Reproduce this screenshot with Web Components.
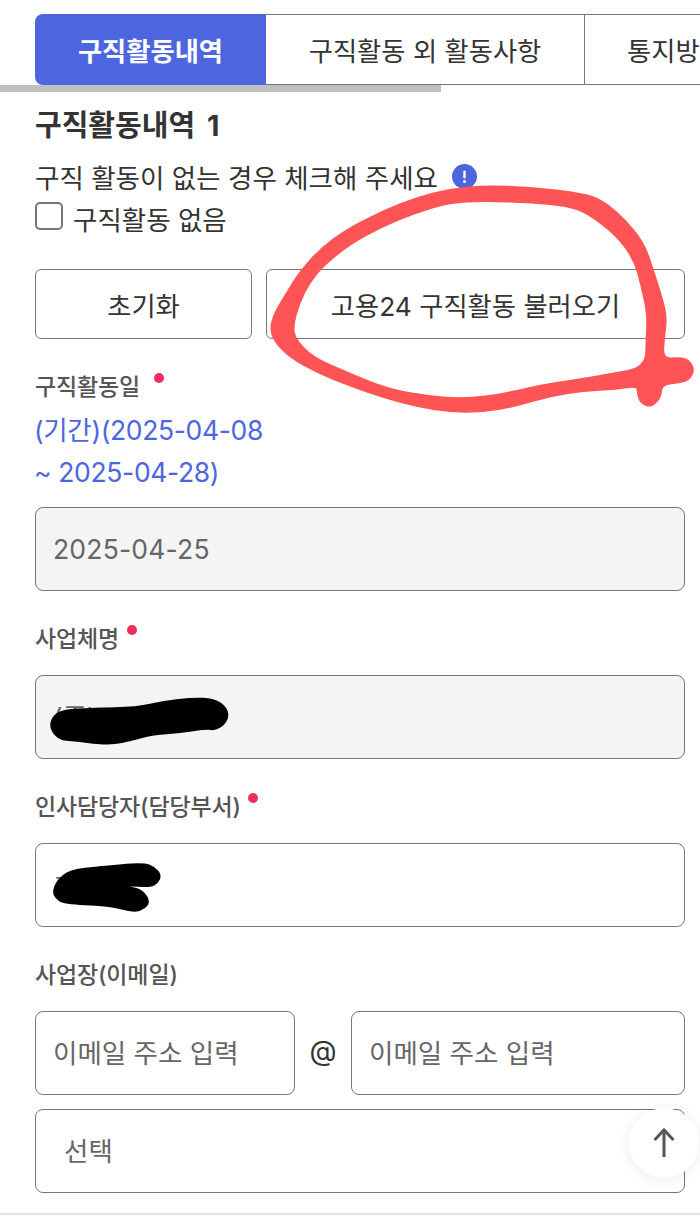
<!DOCTYPE html>
<html lang="ko">
<head>
<meta charset="utf-8">
<title>구직활동내역</title>
<style>
  html, body { margin: 0; padding: 0; background: #fff; }
  body {
    position: relative;
    width: 700px;
    height: 1219px;
    overflow: hidden;
    font-family: Inter, "Noto Sans CJK KR", "Noto Sans", sans-serif;
    color: #333;
  }
</style>
</head>
<body>
<job-tabs>
  <job-tab active>구직활동내역</job-tab>
  <job-tab>구직활동 외 활동사항</job-tab>
  <job-tab>통지방법</job-tab>
</job-tabs>

<job-form>
  <job-heading>구직활동내역 1</job-heading>
  <job-notice>구직 활동이 없는 경우 체크해 주세요</job-notice>
  <job-check>구직활동 없음</job-check>

  <job-button slot="buttons">초기화</job-button>
  <job-button slot="buttons">고용24 구직활동 불러오기</job-button>

  <job-field slot="fields" label="구직활동일" required gap="14" style="--label-gap:5px">
    <job-period>(기간)(2025-04-08<br>~ 2025-04-28)</job-period>
    <job-input disabled>2025-04-25</job-input>
  </job-field>
  <job-field slot="fields" label="사업체명" required gap="8">
    <job-input disabled hangul>(주)</job-input>
  </job-field>
  <job-field slot="fields" label="인사담당자(담당부서)" required gap="7">
    <job-input hangul>초</job-input>
  </job-field>
  <job-field slot="fields" label="사업장(이메일)">
    <job-email></job-email>
    <job-input select hangul>선택</job-input>
  </job-field>
</job-form>

<job-marks></job-marks>
<job-top></job-top>

<script>
class JobTabs extends HTMLElement {
  constructor() {
    super();
    this.attachShadow({ mode: 'open' });
    this.shadowRoot.innerHTML = `
      <style>
        :host { display: block; padding-top: 14px; }
        .row { display: flex; margin-left: 35px; height: 71px; overflow: hidden; }
        .bar { width: 441px; height: 7px; background: #c0c0c0; }
      </style>
      <div class="row"><slot></slot></div>
      <div class="bar"></div>
    `;
  }
}

class JobTab extends HTMLElement {
  constructor() {
    super();
    this.attachShadow({ mode: 'open' });
    this.shadowRoot.innerHTML = `
      <style>
        :host {
          display: flex;
          align-items: center;
          justify-content: center;
          flex: none;
          box-sizing: border-box;
          height: 71px;
          font-size: 26.3px;
          color: #333;
          border-top: 1px solid #777;
          border-bottom: 1px solid #777;
          border-right: 1px solid #777;
          width: 319px;
        }
        :host(:last-child) { width: 200px; padding-left: 42px; justify-content: flex-start; border-right: 0; }
        :host([active]) {
          width: 231px;
          background: #4d66e0;
          color: #fff;
          font-weight: 700;
          border: 0;
          border-radius: 8px 0 0 8px;
        }
      </style>
      <slot></slot>
    `;
  }
}

class JobForm extends HTMLElement {
  constructor() {
    super();
    this.attachShadow({ mode: 'open' });
    this.shadowRoot.innerHTML = `
      <style>
        :host { display: block; padding: 0 15px 0 35px; }
        .buttons { display: grid; grid-template-columns: 217px 419px; column-gap: 14px; margin-top: 30px; }
        .line { height: 2px; margin: 20px -15px 0 -35px; background: #e4e4e4; }
      </style>
      <slot></slot>
      <div class="buttons"><slot name="buttons"></slot></div>
      <slot name="fields"></slot>
      <div class="line"></div>
    `;
  }
}

class JobHeading extends HTMLElement {
  constructor() {
    super();
    this.attachShadow({ mode: 'open' });
    this.shadowRoot.innerHTML = `
      <style>
        :host { display: block; margin-top: 13px; height: 42px; line-height: 42px; font-size: 29px; font-weight: 700; word-spacing: 5px; color: #333; }
      </style>
      <slot></slot>
    `;
  }
}

class JobNotice extends HTMLElement {
  constructor() {
    super();
    this.attachShadow({ mode: 'open' });
    this.shadowRoot.innerHTML = `
      <style>
        :host { display: flex; align-items: center; gap: 14px; margin-top: 9px; height: 41px; font-size: 26.5px; color: #333; }
        svg { flex: none; }
      </style>
      <span><slot></slot></span>
      <svg width="25" height="25" viewBox="0 0 25 25">
        <circle cx="12.5" cy="12.5" r="12.5" fill="#4d66e0"/>
        <rect x="11.3" y="6.5" width="2.4" height="8" rx="1" fill="#fff"/>
        <circle cx="12.5" cy="17.6" r="1.5" fill="#fff"/>
      </svg>
    `;
  }
}

class JobCheck extends HTMLElement {
  constructor() {
    super();
    this.attachShadow({ mode: 'open' });
    this.shadowRoot.innerHTML = `
      <style>
        :host { display: flex; align-items: center; gap: 10px; height: 42px; font-size: 26.5px; color: #333; }
        .box { flex: none; box-sizing: border-box; width: 28px; height: 28px; margin-top: -4px; border: 2px solid #777; border-radius: 5px; background: #fff; }
      </style>
      <span class="box"></span>
      <span><slot></slot></span>
    `;
  }
}

class JobButton extends HTMLElement {
  constructor() {
    super();
    this.attachShadow({ mode: 'open' });
    this.shadowRoot.innerHTML = `
      <style>
        :host {
          display: flex;
          align-items: center;
          justify-content: center;
          box-sizing: border-box;
          height: 70px;
          border: 1px solid #777;
          border-radius: 6px;
          background: #fff;
          font-size: 26.3px;
          color: #333;
        }
      </style>
      <slot></slot>
    `;
  }
}

class JobField extends HTMLElement {
  constructor() {
    super();
    this.attachShadow({ mode: 'open' });
    const dot = this.hasAttribute('required')
      ? `<i style="margin-left:${this.getAttribute('gap')}px"></i>` : '';
    this.shadowRoot.innerHTML = `
      <style>
        :host { display: block; padding-top: 31px; }
        .label {
          display: flex;
          height: 34px;
          line-height: 34px;
          margin-bottom: var(--label-gap, 19px);
          font-size: 23px;
          font-weight: 500;
          letter-spacing: -0.15px;
          color: #555;
        }
        i { width: 10px; height: 10px; margin-top: 3px; border-radius: 50%; background: #ef2d5e; }
      </style>
      <div class="label"><span>${this.getAttribute('label')}</span>${dot}</div>
      <slot></slot>
    `;
  }
}

class JobPeriod extends HTMLElement {
  constructor() {
    super();
    this.attachShadow({ mode: 'open' });
    this.shadowRoot.innerHTML = `
      <style>
        :host { display: block; margin: 0 0 14px -1px; font-size: 26.5px; letter-spacing: -0.35px; line-height: 42px; color: #4d66e0; }
      </style>
      <slot></slot>
    `;
  }
}

class JobInput extends HTMLElement {
  constructor() {
    super();
    this.attachShadow({ mode: 'open' });
    this.shadowRoot.innerHTML = `
      <style>
        :host {
          display: flex;
          align-items: center;
          box-sizing: border-box;
          height: 84px;
          padding-left: 17px;
          border: 1px solid #777;
          border-radius: 8px;
          background: #fff;
          font-size: 26.5px;
          letter-spacing: 0.2px;
          color: #666;
          min-width: 0;
        }
        :host([disabled]) { background: #f4f4f4; }
        :host([hangul]) { padding-bottom: 4px; letter-spacing: 0; }
        :host([select]) { padding-left: 28px; margin-top: 14px; }
      </style>
      <slot></slot>
    `;
  }
}

class JobEmail extends HTMLElement {
  constructor() {
    super();
    this.attachShadow({ mode: 'open' });
    this.shadowRoot.innerHTML = `
      <style>
        :host { display: grid; grid-template-columns: 260px 56px 334px; align-items: center; }
        .at { padding-bottom: 4px; text-align: center; font-size: 28px; color: #333; }
      </style>
      <job-input hangul>이메일 주소 입력</job-input>
      <span class="at">@</span>
      <job-input hangul>이메일 주소 입력</job-input>
    `;
  }
}

// 손으로 그린 표시들: 점 목록을 부드러운 닫힌 곡선으로 바꿔서 채운다
function blob(points, ox, oy) {
  const p = points.map(([x, y]) => [x / 3 + ox, y / 3 + oy]);
  const mid = (a, b) => [(a[0] + b[0]) / 2, (a[1] + b[1]) / 2];
  const start = mid(p[p.length - 1], p[0]);
  let d = `M${start[0].toFixed(1)} ${start[1].toFixed(1)}`;
  p.forEach((c, i) => {
    const m = mid(c, p[(i + 1) % p.length]);
    d += ` Q${c[0].toFixed(1)} ${c[1].toFixed(1)} ${m[0].toFixed(1)} ${m[1].toFixed(1)}`;
  });
  return d + ' Z';
}

const redOuter = [[1335,600],[1320,630],[1290,640],[1237,645],[1235,680],[1215,705],[1195,712],[1170,700],[1160,670],[1160,650],[1100,660],[1000,665],[900,680],[800,710],[700,728],[600,728],[500,712],[400,685],[300,650],[200,610],[120,565],[75,520],[58,480],[70,430],[110,365],[150,300],[210,235],[290,175],[400,120],[500,80],[600,55],[700,45],[850,50],[1000,68],[1060,90],[1130,150],[1185,220],[1215,310],[1240,390],[1252,440],[1245,500],[1240,565],[1290,560],[1320,570]];
const redInner = [[1185,590],[1187,500],[1190,430],[1170,340],[1150,270],[1100,200],[1010,130],[950,110],[850,100],[700,95],[600,100],[500,130],[400,170],[300,225],[220,290],[180,340],[150,400],[130,470],[140,510],[190,560],[280,600],[400,650],[500,672],[640,685],[760,670],[860,645],[960,630],[1080,610]];
const inkOne = [[88,345],[100,315],[130,298],[220,293],[350,290],[430,272],[520,262],[580,265],[615,285],[628,315],[615,345],[585,362],[560,358],[480,370],[400,375],[340,392],[280,405],[220,402],[150,392],[125,392],[100,375]];
const inkTwo = [[97,845],[110,810],[150,778],[240,768],[370,757],[405,770],[425,795],[415,820],[390,833],[320,828],[360,835],[385,860],[388,885],[360,905],[330,905],[260,888],[130,883],[105,865]];

class JobMarks extends HTMLElement {
  constructor() {
    super();
    this.attachShadow({ mode: 'open' });
    this.shadowRoot.innerHTML = `
      <style>
        :host { position: absolute; left: 0; top: 0; width: 700px; height: 1219px; pointer-events: none; }
        svg { display: block; }
      </style>
      <svg width="700" height="1219" viewBox="0 0 700 1219">
        <path fill="#ff5455" fill-rule="evenodd" d="${blob(redOuter, 250, 170)} ${blob(redInner, 250, 170)}"/>
        <path fill="#000" d="${blob(inkOne, 20, 610)}"/>
        <path fill="#000" d="${blob(inkTwo, 20, 610)}"/>
      </svg>
    `;
  }
}

class JobTop extends HTMLElement {
  constructor() {
    super();
    this.attachShadow({ mode: 'open' });
    this.shadowRoot.innerHTML = `
      <style>
        :host {
          position: absolute;
          left: 629px;
          top: 1108px;
          display: flex;
          align-items: center;
          justify-content: center;
          width: 70px;
          height: 70px;
          border-radius: 50%;
          background: #fff;
          box-shadow: 0 2px 14px rgba(0,0,0,.08);
        }
      </style>
      <svg width="26" height="32" viewBox="0 0 26 32" fill="none" stroke="#555" stroke-width="3">
        <path d="M13 3 V30"/>
        <path d="M3.5 13 L13 3 L22.5 13"/>
      </svg>
    `;
  }
}

customElements.define('job-tabs', JobTabs);
customElements.define('job-tab', JobTab);
customElements.define('job-form', JobForm);
customElements.define('job-heading', JobHeading);
customElements.define('job-notice', JobNotice);
customElements.define('job-check', JobCheck);
customElements.define('job-button', JobButton);
customElements.define('job-field', JobField);
customElements.define('job-period', JobPeriod);
customElements.define('job-input', JobInput);
customElements.define('job-email', JobEmail);
customElements.define('job-marks', JobMarks);
customElements.define('job-top', JobTop);
</script>
</body>
</html>
